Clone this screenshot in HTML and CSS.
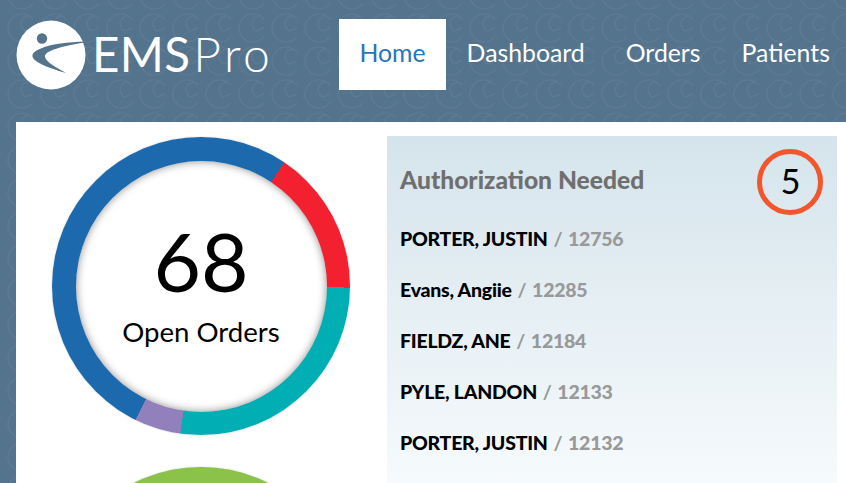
FILE: index.html
```html
<!DOCTYPE html>
<html lang="en">
<head>
    <meta charset="UTF-8">
    <meta name="viewport" content="width=device-width, initial-scale=1.0">
    <title>EMS Pro</title>
    <link rel="stylesheet" href="styles.css">
</head>
<body>
    <div class="header">
        <div class="logo">
            <svg class="logo-mark" viewBox="0 0 70 70" width="70" height="70">
                <circle cx="35" cy="35" r="34.5" fill="#fff"/>
                <circle cx="26" cy="18.5" r="5.2" fill="#54738d"/>
                <path d="M69 21.5 C52 22 36 24 26 28 C18 31 15 34 17 38 C21 44 36 49 50 53 C41 48 30 42 29 37 C28 32 40 27 69 22.5 Z" fill="#54738d"/>
            </svg>
            <span class="logo-text">EMS<span class="logo-light">Pro</span></span>
        </div>
        <div class="nav">
            <a class="nav-item active">Home</a>
            <a class="nav-item">Dashboard</a>
            <a class="nav-item">Orders</a>
            <a class="nav-item">Patients</a>
        </div>
    </div>

    <div class="main">
        <div class="charts">
            <div class="donut donut-orders">
                <div class="donut-center">
                    <div class="donut-number">68</div>
                    <div class="donut-label">Open Orders</div>
                </div>
            </div>
            <div class="donut donut-green"></div>
        </div>

        <div class="panel">
            <div class="panel-head">
                <h2 class="panel-title">Authorization Needed</h2>
                <span class="badge">5</span>
            </div>
            <div class="patient"><b>PORTER, JUSTIN</b> <span class="sep">/</span> <span class="patient-id">12756</span></div>
            <div class="patient"><b>Evans, Angiie</b> <span class="sep">/</span> <span class="patient-id">12285</span></div>
            <div class="patient"><b>FIELDZ, ANE</b> <span class="sep">/</span> <span class="patient-id">12184</span></div>
            <div class="patient"><b>PYLE, LANDON</b> <span class="sep">/</span> <span class="patient-id">12133</span></div>
            <div class="patient"><b>PORTER, JUSTIN</b> <span class="sep">/</span> <span class="patient-id">12132</span></div>
        </div>
    </div>
</body>
</html>
```

FILE: styles.css
```css
* {
    margin: 0;
    padding: 0;
    box-sizing: border-box;
}

html, body {
    height: 100%;
    overflow: hidden;
}

body {
    font-family: Lato, "Open Sans", sans-serif;
    color: #000;
    background-color: #54738d;
    background-image: url("data:image/svg+xml,%3Csvg xmlns='http://www.w3.org/2000/svg' width='33' height='33' viewBox='0 0 33 33'%3E%3Cg fill='none' stroke='%23fff' stroke-opacity='.06' stroke-width='1.2'%3E%3Ccircle cx='22' cy='28' r='14'/%3E%3Cpath d='M28 16 C20 18 19 26 25 31 M36 25 C32 29 29 30 25 31'/%3E%3Ccircle cx='22' cy='-5' r='14'/%3E%3C/g%3E%3C/svg%3E");
}

/* Header */
.header {
    display: flex;
    height: 122px;
    padding-left: 16px;
}

.logo {
    display: flex;
    flex: none;
    align-items: center;
    width: 323px;
    height: 110px;
    color: #fff;
}

.logo-mark {
    flex: none;
}

.logo-text {
    margin-left: 6px;
    padding-bottom: 3px;
    font-size: 47.5px;
    letter-spacing: 0.3px;
}

.logo-light {
    margin-left: 3px;
    font-size: 48px;
    font-weight: 300;
    letter-spacing: 3.5px;
}

.nav {
    display: flex;
    flex: none;
    align-self: flex-start;
    margin-top: 19px;
}

.nav-item {
    display: flex;
    align-items: center;
    height: 71px;
    padding: 0 20.5px 5px;
    font-size: 24.8px;
    color: #fff;
    white-space: nowrap;
}

.nav-item.active {
    background: #fff;
    color: #2a74b8;
}

/* Main area */
.main {
    display: flex;
    height: calc(100vh - 122px);
    margin-left: 16px;
    background: #fff;
    overflow: hidden;
}

.charts {
    display: flex;
    flex-direction: column;
    align-items: center;
    flex: none;
    gap: 32px;
    width: 371px;
    padding: 15px 1px 0 0;
}

.donut {
    display: flex;
    align-items: center;
    justify-content: center;
    flex: none;
    width: 298px;
    height: 298px;
    border-radius: 50%;
    box-shadow: 0 0 2px rgba(0, 0, 0, 0.2);
}

.donut-orders {
    background: conic-gradient(#1c69ae 0deg 34deg, #f3212f 34deg 90.6deg, #00aeb3 90.6deg 188deg, #9180bb 188deg 206deg, #1c69ae 206deg 360deg);
}

.donut-green {
    background: #8bc34a;
}

.donut-center {
    width: 251px;
    height: 251px;
    border-radius: 50%;
    background: #fff;
    box-shadow: inset 0 0 8px rgba(0, 0, 0, 0.45);
    text-align: center;
}

.donut-number {
    margin-top: 50px;
    font-size: 82px;
    line-height: 98px;
}

.donut-label {
    margin-top: 6px;
    font-size: 27.6px;
    line-height: 33px;
}

/* Authorization panel */
.panel {
    flex: none;
    width: 450px;
    margin-top: 14px;
    padding: 13px 14px 0 13px;
    background: linear-gradient(#d5e4ec, #f6fafc 347px);
}

.panel-head {
    display: flex;
    align-items: center;
    justify-content: space-between;
    height: 66px;
    margin-bottom: -2px;
}

.panel-title {
    padding-bottom: 6px;
    font-size: 24.6px;
    font-weight: 900;
    color: #6f6f6f;
}

.badge {
    display: flex;
    align-items: center;
    justify-content: center;
    width: 66px;
    height: 66px;
    padding: 0 0 4px 1px;
    border: 5px solid #f1562c;
    border-radius: 50%;
    font-size: 34.5px;
}

.patient {
    height: 51px;
    line-height: 51px;
    font-size: 19.5px;
    letter-spacing: -0.25px;
    white-space: nowrap;
}

.patient b {
    font-weight: 900;
}

.sep {
    margin: 0 1px;
    font-weight: 700;
    color: #999;
}

.patient-id {
    font-weight: 900;
    color: #999;
}
```
